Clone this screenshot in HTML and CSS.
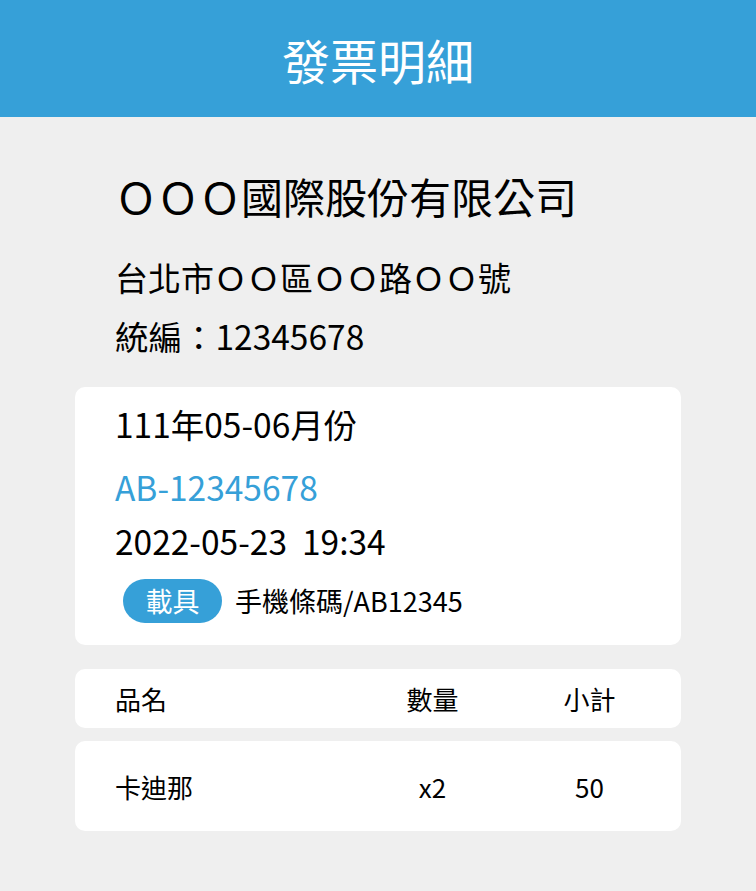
FILE: index.html
```html
<!DOCTYPE html>
<html lang="zh-Hant">
<head>
<meta charset="utf-8">
<title>發票明細</title>
<link rel="stylesheet" href="styles.css">
</head>
<body>
<header class="topbar">
  <h1 class="topbar-title">發票明細</h1>
</header>
<main class="content">
  <section class="seller">
    <div class="seller-name">ＯＯＯ國際股份有限公司</div>
    <div class="seller-addr">台北市ＯＯ區ＯＯ路ＯＯ號</div>
    <div class="seller-tax">統編：12345678</div>
  </section>
  <section class="card invoice">
    <div class="inv-period">111年05-06月份</div>
    <div class="inv-number">AB-12345678</div>
    <div class="inv-time">2022-05-23&nbsp;&nbsp;19:34</div>
    <div class="inv-carrier">
      <span class="badge">載具</span>
      <span class="carrier-text">手機條碼/AB12345</span>
    </div>
  </section>
  <div class="card trow thead">
    <span class="c-name">品名</span>
    <span class="c-qty">數量</span>
    <span class="c-sub">小計</span>
  </div>
  <div class="card trow tbody">
    <span class="c-name">卡迪那</span>
    <span class="c-qty">x2</span>
    <span class="c-sub">50</span>
  </div>
</main>
</body>
</html>
```

FILE: styles.css
```css
* { box-sizing: border-box; }
html, body {
  margin: 0;
  padding: 0;
}
body {
  background: #efefef;
  font-family: "Noto Sans CJK TC", "Noto Sans", sans-serif;
  font-weight: 400;
  color: #000;
  width: 756px;
  min-height: 891px;
}
.topbar {
  height: 117px;
  background: #36a0d8;
  display: flex;
  align-items: center;
  justify-content: center;
}
.topbar-title {
  margin: 0;
  font-size: 48px;
  font-weight: 400;
  color: #fff;
  line-height: 1;
}
.content {
  padding: 0 75px;
}
.seller {
  padding: 47px 40px 0 40px;
}
.seller-name {
  font-size: 42px;
  line-height: 63px;
}
.seller-addr {
  font-size: 33px;
  line-height: 48px;
  margin-top: 26px;
}
.seller-tax {
  font-size: 33.5px;
  line-height: 48px;
  margin-top: 11px;
}
.card {
  background: #fff;
  border-radius: 10px;
}
.invoice {
  margin-top: 27px;
  padding: 13px 40px 22px 40px;
  font-size: 33.5px;
  line-height: 48px;
}
.inv-number {
  color: #36a0d8;
  margin-top: 15px;
}
.inv-time {
  margin-top: 6px;
}
.inv-carrier {
  margin-top: 14px;
  display: flex;
  align-items: center;
  gap: 13px;
}
.badge {
  margin-left: 8px;
  width: 99px;
  height: 44px;
  border-radius: 22px;
  background: #36a0d8;
  color: #fff;
  font-size: 27px;
  line-height: 44px;
  text-align: center;
}
.carrier-text {
  font-size: 27px;
  line-height: 44px;
}
.trow {
  display: grid;
  grid-template-columns: 1fr 157px 157px;
  align-items: center;
  padding: 0 13px 0 40px;
  font-size: 26px;
}
.thead {
  margin-top: 24px;
  height: 59px;
}
.tbody {
  margin-top: 13px;
  height: 90px;
}
.c-qty, .c-sub {
  text-align: center;
}
```
